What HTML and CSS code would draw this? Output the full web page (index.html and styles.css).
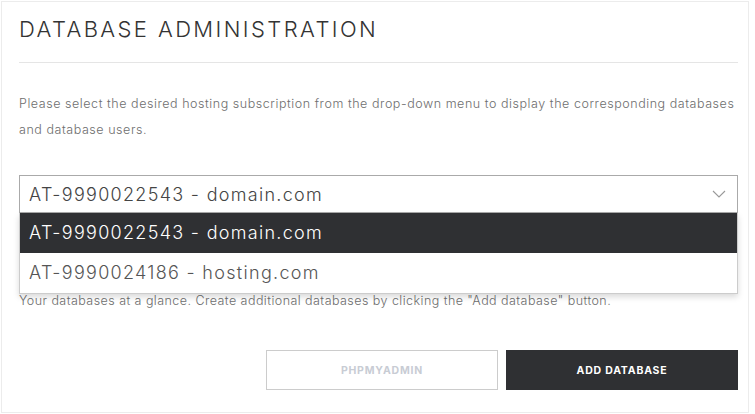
FILE: index.html
```html
<!DOCTYPE html>
<html lang="en">
<head>
    <meta charset="UTF-8">
    <meta name="viewport" content="width=device-width, initial-scale=1.0">
    <title>Database administration</title>
    <link rel="stylesheet" href="styles.css">
</head>
<body>
    <div class="db-panel">
        <h2>Database Administration</h2>
        <p class="intro">Please select the desired hosting subscription from the drop-down menu to display the corresponding databases and database users.</p>

        <div class="picker">
            <div class="picker-current">
                <span>AT-9990022543 - domain.com</span>
                <svg class="chevron" width="14" height="8" viewBox="0 0 14 8"><path d="M1 1l6 6 6-6" fill="none" stroke="#999" stroke-width="1.1"/></svg>
            </div>
            <ul class="picker-options">
                <li class="selected">AT-9990022543 - domain.com</li>
                <li>AT-9990024186 - hosting.com</li>
            </ul>
        </div>

        <p class="note">Your databases at a glance. Create additional databases by clicking the "Add database" button.</p>

        <div class="actions">
            <button class="btn btn-outline" disabled>phpMyAdmin</button>
            <button class="btn btn-dark">Add database</button>
        </div>
    </div>
</body>
</html>
```

FILE: styles.css
```css
body {
    margin: 0;
    background: #fff;
    font-family: Inter, "Open Sans", sans-serif;
}

.db-panel {
    box-sizing: border-box;
    width: 748px;
    height: 412px;
    margin: 1px 0 0 1px;
    padding: 14px 10px 0 17px;
    border: 1px solid #ececec;
    background: #fff;
}

.db-panel h2 {
    margin: 0;
    padding-bottom: 20px;
    border-bottom: 1px solid #e5e5e5;
    font-size: 22px;
    font-weight: 300;
    letter-spacing: 2.4px;
    text-transform: uppercase;
    color: #333;
    line-height: 26px;
}

.intro {
    margin: 28px 0 0;
    font-size: 12.5px;
    font-weight: 300;
    line-height: 26px;
    color: #6e6e6e;
    letter-spacing: 0.55px;
}

.picker {
    position: relative;
    margin-top: 32px;
}

.picker-current {
    box-sizing: border-box;
    display: flex;
    align-items: center;
    justify-content: space-between;
    height: 38px;
    padding: 0 11px 0 9px;
    border: 1px solid #aaa;
    font-size: 18px;
    font-weight: 300;
    color: #444;
    letter-spacing: 1.3px;
}

.picker-options {
    position: absolute;
    top: 38px;
    left: 0;
    right: 0;
    margin: 0;
    padding: 0;
    list-style: none;
    background: #fff;
    border: 1px solid #ccc;
    border-top: none;
    box-shadow: 0 3px 6px rgba(0, 0, 0, 0.15);
    z-index: 2;
}

.picker-options li {
    height: 40px;
    line-height: 40px;
    padding-left: 9px;
    font-size: 18px;
    font-weight: 300;
    color: #555;
    letter-spacing: 1.3px;
}

.picker-options li.selected {
    background: #2f3033;
    color: #fff;
}

.note {
    margin: 75px 0 0;
    font-size: 12.5px;
    font-weight: 300;
    line-height: 26px;
    color: #6e6e6e;
    letter-spacing: 0.45px;
}

.actions {
    display: flex;
    justify-content: flex-end;
    gap: 8px;
    margin-top: 36px;
}

.btn {
    width: 232px;
    height: 40px;
    font-family: inherit;
    font-size: 10.5px;
    font-weight: 700;
    letter-spacing: 0.8px;
    text-transform: uppercase;
}

.btn-outline {
    background: #fff;
    border: 1px solid #ccc;
    color: #c8ccd4;
}

.btn-dark {
    background: #2f3033;
    border: 1px solid #2f3033;
    color: #fff;
}
```
